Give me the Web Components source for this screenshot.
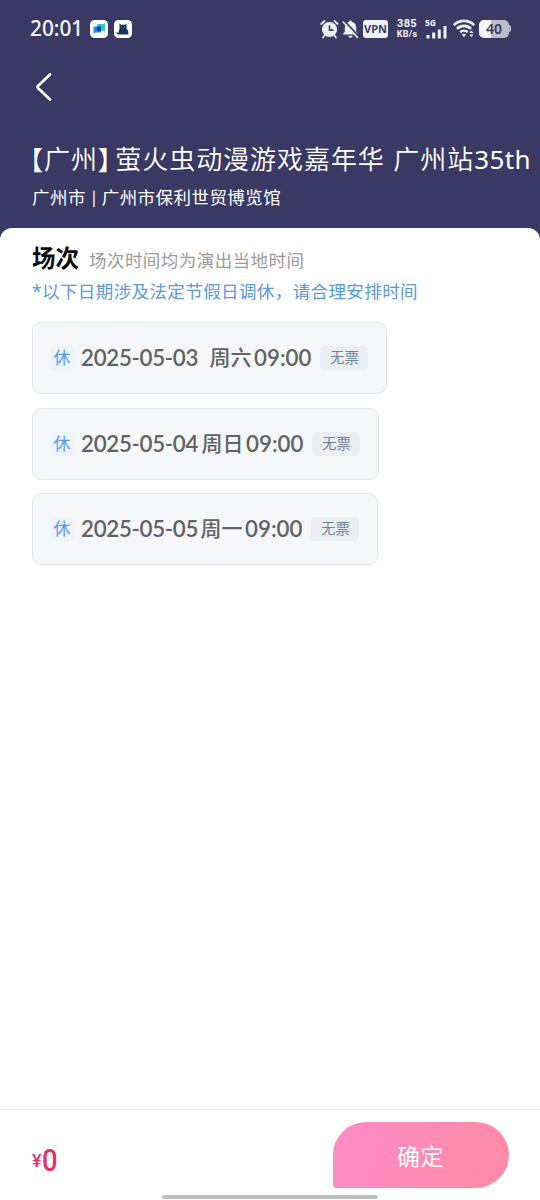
<!DOCTYPE html>
<html lang="zh-CN">
<head>
<meta charset="UTF-8">
<meta name="viewport" content="width=device-width, initial-scale=1">
<title>场次</title>
<style>
    body {
        margin: 0;
        font-family: Lato, "Noto Sans CJK SC", sans-serif;
    }
</style>
</head>
<body>
<session-page></session-page>
<script>
class StatusBar extends HTMLElement{
    constructor(){
        super();
        this.attachShadow({mode: "open"}).innerHTML = `
        <style>
        :host {
            display: flex;
            align-items: center;
            height: 57px;
            padding: 0 30px;
            box-sizing: border-box;
            color: #f4f4fb;
            font-family: "Noto Sans", sans-serif;
            white-space: nowrap;
        }
        svg {
            display: block;
            flex: none;
        }
        .time {
            width: 53px;
            margin: -2px 7px 0 0;
            font-size: 20.8px;
            font-weight: 500;
        }
        .app {
            margin-right: 5.5px;
        }
        .right {
            display: flex;
            align-items: center;
            margin-left: auto;
        }
        .vpn {
            width: 25px;
            height: 18px;
            margin: 0 7px 0 3px;
            border-radius: 3px;
            background: #f0f0f8;
            color: #3b3963;
            font: 700 11px/18px "Noto Sans", sans-serif;
            text-align: center;
        }
        .speed {
            display: flex;
            flex-direction: column;
            width: 24px;
            height: 21px;
            margin-right: 6px;
            font-family: Roboto, sans-serif;
            font-size: 11px;
            font-weight: 700;
            line-height: 11px;
            letter-spacing: .3px;
            text-align: center;
        }
        .speed .unit {
            font-size: 9px;
            line-height: 10px;
        }
        .cell {
            width: 24px;
            margin-right: 4px;
            font-size: 8.5px;
            font-weight: 700;
            line-height: 8px;
        }
        .cell svg {
            margin-top: -3px;
        }
        .battery {
            width: 30px;
            height: 18px;
            margin-left: 4px;
            border-radius: 5px;
            background: linear-gradient(90deg, #f6f6fb 40%, #bdbccb 40%);
            color: #3b3a55;
            font: 600 14px/18px "Noto Sans", sans-serif;
            text-align: center;
        }
        .tip {
            width: 1.5px;
            height: 7px;
            border-radius: 0 2px 2px 0;
            background: #bdbccb;
            margin-right: -.5px;
        }
        </style>
        <span class="time">20:01</span>
        <svg class="app" width="18" height="18" viewBox="0 0 18 18">
            <rect width="18" height="18" rx="4.5" fill="#fff"/>
            <rect x="7" y="4" width="8" height="7" rx="1" fill="#25ccd2"/>
            <path d="M4 6.5h7v6H5.5l-2 1.2V7a.5.5 0 0 1 .5-.5z" fill="#2c84fb"/>
            <rect x="7" y="6.5" width="4" height="4.5" fill="#0a3fae"/>
        </svg>
        <svg class="app" width="18" height="18" viewBox="0 0 18 18">
            <rect width="18" height="18" rx="4.5" fill="#fff"/>
            <path d="M5.500 3.200l1.500 1.500h4l1.500-1.500v5l1.800 3.300v3H5.200l-2.500-.6v-1.800l.9-.2.2 1 .7.100 1-4.600z" fill="#17375f"/>
            <path d="M7 7h1M10 7h1" stroke="#8fb6dc" stroke-width=".8"/>
        </svg>
        <div class="right">
            <svg width="19" height="20" viewBox="0 0 19 20">
                <circle cx="9.5" cy="10.5" r="7.6" fill="#f0f0f8"/>
                <path d="M1.200 5L4.600 2M17.800 5L14.400 2M4.500 16.500L3 18.500M14.500 16.500l1.500 2" stroke="#f0f0f8" stroke-width="1.700" stroke-linecap="round"/>
                <path d="M9.500 6.300v4.800h4" fill="none" stroke="#3b3963" stroke-width="1.600"/>
            </svg>
            <svg width="19" height="20" viewBox="0 0 19 20" style="margin-left: 3px; margin-right: -1px">
                <path d="M8.500 1.500c.8 0 1.200.6 1.200 1.200 2.900.7 4.500 2.700 4.500 5.500v4.600l1.700 2v.8H1.100v-.8l1.700-2V8.200c0-2.800 1.600-4.800 4.500-5.500 0-.6.4-1.200 1.200-1.200z" fill="#f0f0f8"/>
                <path d="M6.300 16.800h4.400c-.2 1.200-1 1.900-2.200 1.900s-2-.7-2.200-1.900z" fill="#f0f0f8"/>
                <path d="M2.600 2.200L17 17.500" stroke="#3b3963" stroke-width="1.800"/>
                <path d="M1.200 3l14.300 15.500" stroke="#f0f0f8" stroke-width="1.600" stroke-linecap="round"/>
            </svg>
            <div class="vpn">VPN</div>
            <div class="speed"><span>385</span><span class="unit">KB/s</span></div>
            <div class="cell">5G
                <svg width="24" height="15" viewBox="0 0 24 15">
                    <path d="M3 14.500V11M8.700 14.500V8.500M14.300 14.500V5.500M20 14.500V2" stroke="#f0f0f8" stroke-width="3"/>
                </svg>
            </div>
            <svg width="22" height="19" viewBox="0 0 22 19">
                <g fill="none" stroke="#f0f0f8" stroke-width="2.600">
                    <path d="M.8 6.200a14.200 14.200 0 0 1 20.400 0"/>
                    <path d="M4 9.800a9.800 9.800 0 0 1 14 0"/>
                    <path d="M7.200 13.200a5.300 5.300 0 0 1 7.400 0"/>
                </g>
                <path d="M8.800 15.700a3 3 0 0 1 4.200 0l-2.100 2.300z" fill="#f0f0f8"/>
                <path d="M16.300 14l2.100-2.600 2.100 2.600zM16.300 15.500l2.100 2.600 2.100-2.600z" fill="#f0f0f8"/>
            </svg>
            <div class="battery">40</div>
            <div class="tip"></div>
        </div>`;
    }
}
customElements.define("status-bar", StatusBar);

class EventHeader extends HTMLElement{
    constructor(){
        super();
        this.attachShadow({mode: "open"}).innerHTML = `
        <style>
        :host {
            display: block;
            height: 240px;
            background: #3a3964;
            color: #fff;
            white-space: nowrap;
        }
        .back {
            display: block;
            margin: 14px 0 0 34px;
        }
        h1 {
            display: flex;
            margin: 36px 0 0 30px;
            font-size: 26px;
            font-weight: 350;
            line-height: 40px;
            letter-spacing: .95px;
        }
        .bracket {
            font-family: "Noto Sans CJK SC", sans-serif;
            font-feature-settings: "halt";
        }
        .close {
            margin-right: 3.5px;
        }
        .station {
            margin-left: 8.5px;
        }
        .number {
            font-family: "Noto Sans", sans-serif;
            font-size: 26px;
            font-weight: 400;
            letter-spacing: .4px;
        }
        .venue {
            display: flex;
            margin: 6px 0 0 32px;
            font-size: 17.5px;
            line-height: 26px;
            letter-spacing: .45px;
        }
        .bar {
            margin: 0 5px 0 6px;
        }
        </style>
        <status-bar></status-bar>
        <svg class="back" width="20" height="32" viewBox="0 0 20 32">
            <path d="M16 3.500L4.200 14.800a1.700 1.700 0 0 0 0 2.400L16 28.500" fill="none" stroke="#fff" stroke-width="2.700" stroke-linecap="round"/>
        </svg>
        <h1><span class="bracket">【</span><span>广州</span><span class="bracket close">】</span><span>萤火虫动漫游戏嘉年华</span><span class="station">广州站</span><span class="number">35th</span></h1>
        <div class="venue"><span>广州市</span><span class="bar">|</span><span>广州市保利世贸博览馆</span></div>`;
    }
}
customElements.define("event-header", EventHeader);

class SessionCard extends HTMLElement{
    constructor(){
        super();
        this.attachShadow({mode: "open"}).innerHTML = `
        <style>
        :host {
            display: flex;
            align-items: center;
            width: var(--card-width);
            height: 72px;
            padding-left: 17.5px;
            box-sizing: border-box;
            border: 1px solid #e3e5e8;
            border-radius: 9px;
            background: #f6f7f9;
            color: #616264;
            font-size: 22.3px;
            font-weight: 600;
            line-height: 30px;
            white-space: nowrap;
        }
        .rest {
            width: 24px;
            height: 24px;
            margin-right: 7px;
            border-radius: 4px;
            background: #edf4fa;
            color: #5b96e8;
            font-size: 17px;
            font-weight: 400;
            line-height: 23px;
            text-align: center;
        }
        .date {
            letter-spacing: -.3px;
        }
        .day {
            margin: -2px 2.5px 0 var(--day-gap, 3px);
            font-size: 21px;
            font-weight: 500;
        }
        .state {
            width: 48px;
            height: 24px;
            margin-left: 9px;
            border-radius: 4px;
            background: #ebeff3;
            color: #71829f;
            font-size: 14.5px;
            font-weight: 400;
            line-height: 24px;
            text-align: center;
        }
        </style>
        <span class="rest">休</span>
        <span class="date"><slot name="date"></slot></span>
        <span class="day"><slot name="day"></slot></span>
        <slot name="time"></slot>
        <span class="state"><slot></slot></span>`;
    }
}
customElements.define("session-card", SessionCard);

class SessionList extends HTMLElement{
    constructor(){
        super();
        this.attachShadow({mode: "open"}).innerHTML = `
        <style>
        :host {
            display: block;
            flex: 1;
            margin-top: -12px;
            padding: 13px 32px 0;
            border-radius: 12px 12px 0 0;
            background: #fff;
        }
        .head {
            display: flex;
            align-items: baseline;
            height: 34px;
        }
        h2 {
            margin: 0 10px 0 0;
            color: #080808;
            font-size: 23.5px;
            font-weight: 700;
            line-height: 34px;
        }
        .hint {
            color: #9a9a9a;
            font-size: 17.5px;
            letter-spacing: .45px;
        }
        .notice {
            margin: 3px 0 17px;
            color: #5c98dd;
            font-family: "Noto Sans", "Noto Sans CJK SC", sans-serif;
            font-size: 17.5px;
            line-height: 27px;
            letter-spacing: .4px;
        }
        .list {
            display: flex;
            flex-direction: column;
            gap: 13.5px;
            margin-left: -.5px;
        }
        </style>
        <div class="head">
            <h2>场次</h2>
            <span class="hint">场次时间均为演出当地时间</span>
        </div>
        <div class="notice">*以下日期涉及法定节假日调休，请合理安排时间</div>
        <div class="list"><slot></slot></div>`;
    }
}
customElements.define("session-list", SessionList);

class PayBar extends HTMLElement{
    constructor(){
        super();
        this.attachShadow({mode: "open"}).innerHTML = `
        <style>
        :host {
            display: flex;
            flex-direction: column;
            height: 91px;
            box-sizing: border-box;
            border-top: 1px solid #e7e7e7;
            background: #fff;
        }
        .row {
            display: flex;
            justify-content: space-between;
            margin: 12px 31.5px 0 32px;
        }
        .price {
            display: flex;
            margin-top: 19px;
            color: #e5316c;
            font-family: Roboto, sans-serif;
            font-weight: 500;
            line-height: 38px;
        }
        .yen {
            width: 10px;
            margin-top: 1px;
            font-size: 18px;
        }
        .amount {
            font-size: 32px;
        }
        .amount span {
            display: block;
            transform: scaleX(.86);
            transform-origin: left;
        }
        button {
            width: 176px;
            height: 66px;
            padding: 0;
            border: 0;
            border-radius: 33px 33px 33px 3px;
            background: linear-gradient(100deg, #ff8bc7, #ff8ba6);
            color: #fff;
            font: 400 23px/66px "Noto Sans CJK SC", sans-serif;
            letter-spacing: .5px;
        }
        .home {
            width: 216px;
            height: 4px;
            margin: 6.5px auto 0;
            border-radius: 2px;
            background: #bdbdbd;
        }
        </style>
        <div class="row">
            <div class="price"><span class="yen">¥</span><span class="amount"><span>0</span></span></div>
            <button>确定</button>
        </div>
        <div class="home"></div>`;
    }
}
customElements.define("pay-bar", PayBar);

class SessionPage extends HTMLElement{
    constructor(){
        super();
        this.sessions = [
            {date: "2025-05-03", day: "周六", time: "09:00", width: 355, gap: 11.5},
            {date: "2025-05-04", day: "周日", time: "09:00", width: 347, gap: 3.5},
            {date: "2025-05-05", day: "周一", time: "09:00", width: 346, gap: 2.5},
        ];
        this.attachShadow({mode: "open"});
        this.render();
    }
    render(){
        const cards = this.sessions.map(s => `
            <session-card style="--card-width: ${s.width}px; --day-gap: ${s.gap}px">
                <span slot="date">${s.date}</span>
                <span slot="day">${s.day}</span>
                <span slot="time">${s.time}</span>无票</session-card>`).join("");
        this.shadowRoot.innerHTML = `
        <style>
        :host {
            display: flex;
            flex-direction: column;
            height: 1200px;
            overflow: hidden;
            background: #fff;
        }
        </style>
        <event-header></event-header>
        <session-list>${cards}</session-list>
        <pay-bar></pay-bar>`;
    }
}
customElements.define("session-page", SessionPage);
</script>
</body>
</html>
